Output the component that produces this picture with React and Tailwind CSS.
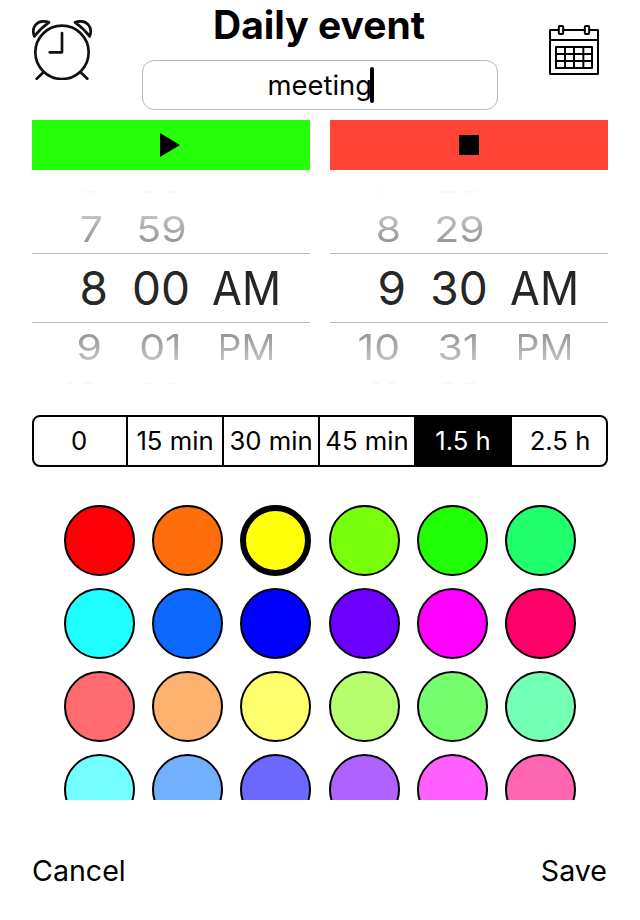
import React, { useState } from "react";
import clsx from "clsx";

const DURATIONS = ["0", "15 min", "30 min", "45 min", "1.5 h", "2.5 h"];

const COLORS = [
  "#ff0007", "#ff6e0a", "#ffff0a", "#78ff0a", "#20ff05", "#20ff6e",
  "#20ffff", "#0d68ff", "#0000ff", "#6b00ff", "#ff00ff", "#ff006b",
  "#ff6b6f", "#ffb270", "#ffff6e", "#b5ff6e", "#75ff6e", "#73ffb4",
  "#73ffff", "#70b0ff", "#6c68ff", "#b062ff", "#ff60ff", "#ff66b2",
];

const START = [["6", "58", ""], ["7", "59", ""], ["8", "00", "AM"], ["9", "01", "PM"], ["10", "02", ""]];
const END = [["7", "28", ""], ["8", "29", ""], ["9", "30", "AM"], ["10", "31", "PM"], ["11", "32", ""]];

function ClockIcon() {
  return (
    <svg className="w-[60px] h-[60px]" viewBox="36 60 180 180" fill="none" stroke="#111" strokeWidth="8" strokeLinecap="round" strokeLinejoin="round">
      <circle cx="126" cy="157" r="80" />
      <path d="M126 99V157H89" />
      <path d="M71 216L50 236M181 216L202 236" />
      <path d="M43 109C33 83 50 55 87 67C70 79 55 93 43 109Z" />
      <path d="M209 109C219 83 202 55 165 67C182 79 197 93 209 109Z" />
    </svg>
  );
}

function CalendarIcon() {
  return (
    <svg className="w-[50px] h-[50px]" viewBox="207 75 150 150" fill="none" stroke="#000" strokeWidth="6" strokeLinejoin="round">
      <rect x="210" y="90" width="144" height="132" rx="1" />
      <path d="M210 120H354" />
      <rect x="236.500" y="78" width="13" height="24" rx="3" fill="#fff" />
      <rect x="314.500" y="78" width="13" height="24" rx="3" fill="#fff" />
      <path d="M228 141H336V204H228ZM228 162H336M228 183H336M255 141V204M282 141V204M310 141V204" />
    </svg>
  );
}

// a row that is rolling away from the middle of the wheel
function FadedRow({ row, below }) {
  const text = clsx(
    "leading-[34px] bg-clip-text text-transparent",
    below ? "bg-linear-to-b from-[#949494] to-[#c4c4c4]" : "bg-linear-to-b from-[#c4c4c4] to-[#949494]"
  );
  return (
    <div className="flex items-center h-12 text-[41px]">
      <span className={clsx(text, "text-right scale-y-[0.87]", below ? "w-[70px]" : "w-[71px]")}>{row[0]}</span>
      <span className={clsx(text, "w-[117px] text-center scale-y-[0.87]")}>{row[1]}</span>
      <span className={clsx(text, "w-[55px] flex justify-center scale-x-[0.93] scale-y-[0.87]")}>{row[2]}</span>
    </div>
  );
}

// only a sliver of the outermost rows can be seen
function EdgeRow({ row, below }) {
  return (
    <div className={clsx("flex h-[2px] overflow-hidden text-[38px] leading-[28px] text-[#f8f8f8]", below ? "items-start" : "items-end")}>
      <span className="w-[68px] text-right">{row[0]}</span>
      <span className="w-[121px] text-center">{row[1]}</span>
    </div>
  );
}

function TimePicker({ rows }) {
  return (
    <div className="w-[278px] pt-[21px]">
      <EdgeRow row={rows[0]} />
      <div className="mt-3">
        <FadedRow row={rows[1]} />
      </div>
      <div className="flex items-center h-[70px] border-y border-[#b8b8b8] text-[46px] text-[#262626]">
        <span className="w-[76px] text-right">{rows[2][0]}</span>
        <span className="w-[106px] text-center">{rows[2][1]}</span>
        <span className="w-[65px] flex justify-center scale-x-[0.94]">{rows[2][2]}</span>
      </div>
      <FadedRow row={rows[3]} below />
      <div className="mt-[11px]">
        <EdgeRow row={rows[4]} below />
      </div>
    </div>
  );
}

export default function App() {
  const [duration, setDuration] = useState("1.5 h");
  const [color, setColor] = useState(2);

  return (
    <div className="w-[640px] h-[920px] overflow-hidden bg-white text-black font-['Inter',sans-serif]">
      <header className="flex justify-between h-[120px] px-8">
        <div className="w-[60px] pt-5">
          <ClockIcon />
        </div>
        <div className="w-[356px] flex flex-col items-center">
          <h1 className="h-[60px] pt-px pr-[2px] text-[39px] leading-[48px] font-bold whitespace-nowrap">Daily event</h1>
          <div className="flex items-center justify-center w-[356px] h-[50px] pl-px rounded-xl border border-[#b8b8b8] text-[27.400px]">
            <span className="pt-px">meeting</span>
            <span className="w-1 h-9 -ml-[2.500px] rounded-full bg-black" />
          </div>
        </div>
        <div className="w-[60px] pt-[25px] flex justify-end pr-[9px]">
          <CalendarIcon />
        </div>
      </header>

      <div className="flex gap-5 px-8">
        <button className="flex items-center justify-center w-[278px] h-[50px] bg-[#26ff0a]">
          <svg className="w-5 h-6 ml-[-2px]" viewBox="0 0 20 24">
            <path d="M0 0L20 12L0 24Z" />
          </svg>
        </button>
        <button className="flex items-center justify-center w-[278px] h-[50px] bg-[#ff4335]">
          <span className="w-5 h-5 bg-black" />
        </button>
      </div>

      <div className="flex gap-5 px-8 h-[245px]">
        <TimePicker rows={START} />
        <TimePicker rows={END} />
      </div>

      <div className="flex mx-8 h-[52px] rounded-lg border-2 border-black overflow-hidden text-[25.700px] leading-[31px]">
        {DURATIONS.map((d, i) => (
          <button
            key={d}
            onClick={() => setDuration(d)}
            className={clsx(
              "flex items-center justify-center pb-px whitespace-nowrap",
              i === 0 || i === 5 ? "w-[94px]" : "w-24",
              i === 0 && "pr-[2px]",
              i === 5 && "pl-[2px]",
              i < 5 && "border-r-2 border-black",
              d === duration && "bg-black text-white"
            )}
          >
            {d}
          </button>
        ))}
      </div>

      <div className="grid grid-cols-[repeat(6,71px)] justify-between gap-y-3 mx-16 mt-[38px] h-[295px] overflow-hidden">
        {COLORS.map((c, i) => (
          <button
            key={c}
            onClick={() => setColor(i)}
            className={clsx("w-[71px] h-[71px] rounded-full border-black", i === color ? "border-6" : "border-2")}
            style={{ backgroundColor: c }}
          />
        ))}
      </div>

      <footer className="flex justify-between pl-8 pr-[33px] pt-[53px] text-[28.600px] leading-9">
        <button>Cancel</button>
        <button>Save</button>
      </footer>
    </div>
  );
}
